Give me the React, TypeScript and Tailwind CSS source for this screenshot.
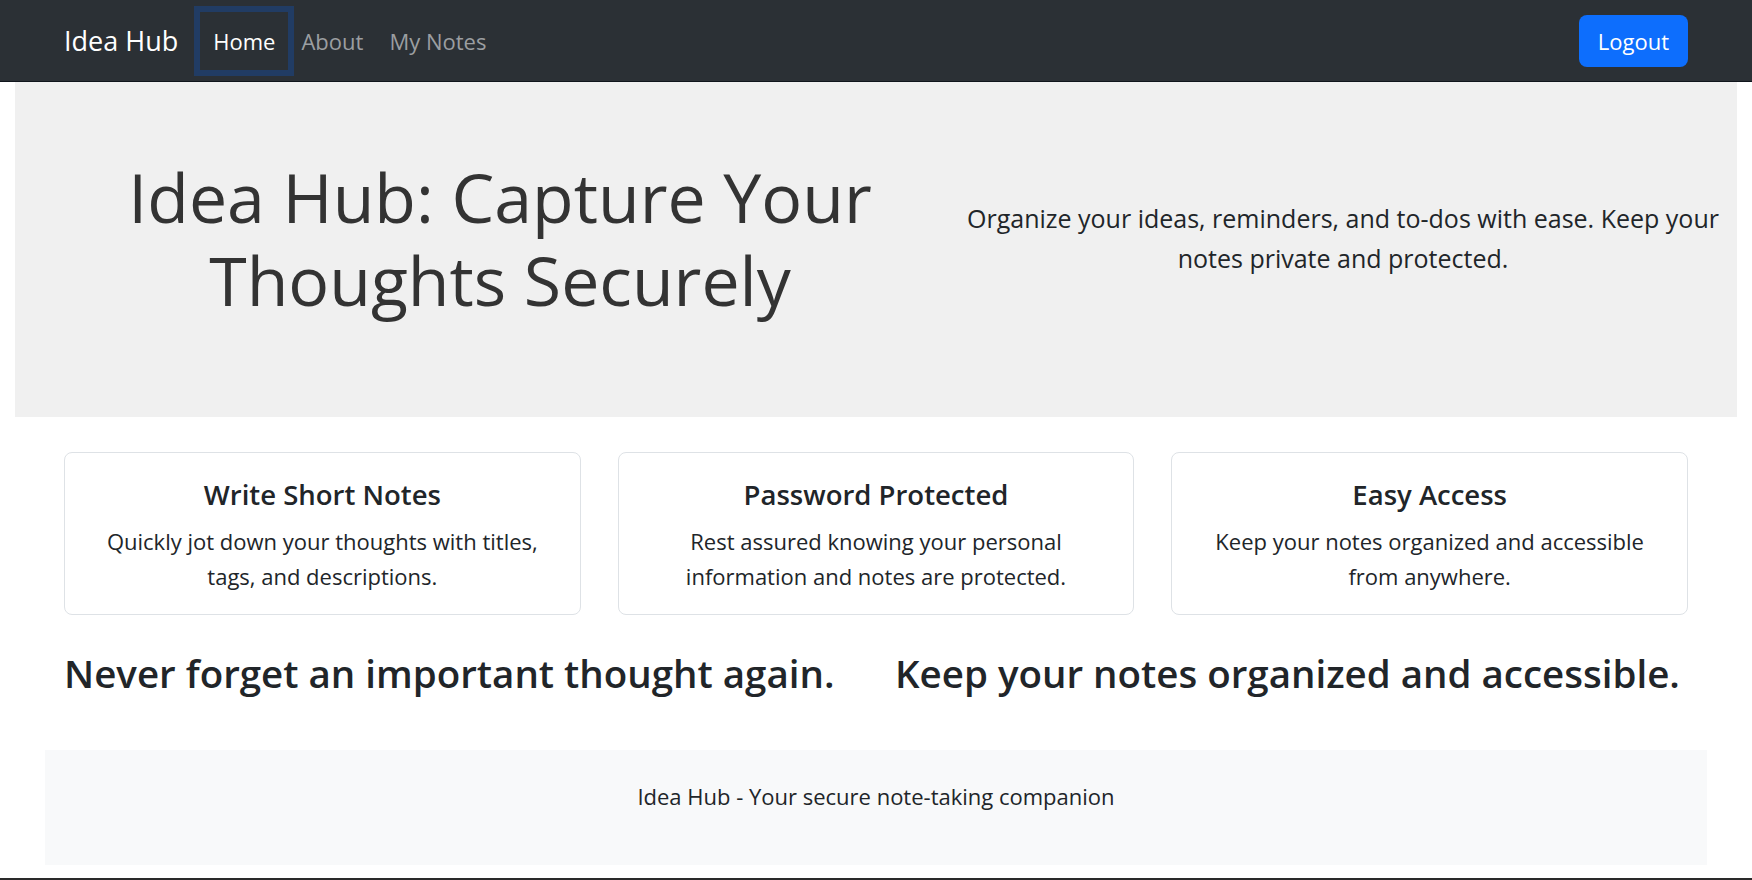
import React from 'react'

const features = [
  {
    title: 'Write Short Notes',
    text: 'Quickly jot down your thoughts with titles, tags, and descriptions.',
  },
  {
    title: 'Password Protected',
    text: 'Rest assured knowing your personal information and notes are protected.',
  },
  {
    title: 'Easy Access',
    text: 'Keep your notes organized and accessible from anywhere.',
  },
]

const Navbar = () => {
  return (
    <nav className="h-[82px] bg-[#2b3035] border-b border-[#10151c]">
      <div className="mx-auto w-[1662px] px-[19px] h-full flex items-center justify-between">
        <div className="flex items-center">
          <a href="#" className="text-[27px] leading-[36px] text-white mr-[22px]">
            Idea Hub
          </a>
          <a
            href="#"
            className="px-[13px] py-[12px] text-[22px] leading-[34px] text-white shadow-[0_0_0_6px_#213c64]"
          >
            Home
          </a>
          <a href="#" className="px-[13px] py-[12px] text-[22px] leading-[34px] text-[#9b9ea1]">
            About
          </a>
          <a href="#" className="px-[13px] py-[12px] text-[22px] leading-[34px] text-[#9b9ea1]">
            My Notes
          </a>
        </div>
        <button className="h-[52px] px-[19px] rounded-[8px] bg-[#0d6efd] text-white text-[22px] leading-[34px]">
          Logout
        </button>
      </div>
    </nav>
  )
}

export default function App() {
  return (
    <div className="min-h-[880px] flex flex-col bg-white text-[#212529]" style={{ fontFamily: '"Open Sans", "Noto Sans", sans-serif' }}>
      <Navbar />

      <section className="mx-[15px] h-[335px] bg-[#f0f0f0] flex items-center pb-[24px]">
        <div className="ml-[85px] w-[800px] text-center">
          <h1 className="text-[68px] leading-[83px] text-[#333333]">
            Idea Hub: Capture Your Thoughts Securely
          </h1>
        </div>
        <div className="ml-[53px] w-[780px] text-center">
          <p className="text-[25px] leading-[40px]">
            Organize your ideas, reminders, and to-dos with ease. Keep your notes private and protected.
          </p>
        </div>
      </section>

      <main className="mx-auto w-[1662px] px-[19px]">
        <div className="grid grid-cols-3 gap-[37px] mt-[35px]">
          {features.map((f) => (
            <div
              key={f.title}
              className="border border-[#dee2e6] rounded-[8px] px-[22px] pt-[25px] pb-[20px] text-center"
            >
              <h3 className="text-[27.5px] leading-[34px] font-semibold mb-[12px]">{f.title}</h3>
              <p className="text-[22px] leading-[35px] px-[10px]">{f.text}</p>
            </div>
          ))}
        </div>

        <div className="grid grid-cols-2 gap-[38px] mt-[34px]">
          <h2 className="text-[38.5px] leading-[48px] font-semibold">Never forget an important thought again.</h2>
          <h2 className="text-[38.5px] leading-[48px] font-semibold">Keep your notes organized and accessible.</h2>
        </div>
      </main>

      <footer className="mx-auto w-[1662px] mt-[53px] bg-[#f8f9fa] pt-[30px] pb-[30px] text-center">
        <p className="text-[22px] leading-[33px] mb-[22px]">Idea Hub - Your secure note-taking companion</p>
      </footer>

      <div className="mt-auto h-[2px] bg-[#2a2a2a]" />
    </div>
  )
}
